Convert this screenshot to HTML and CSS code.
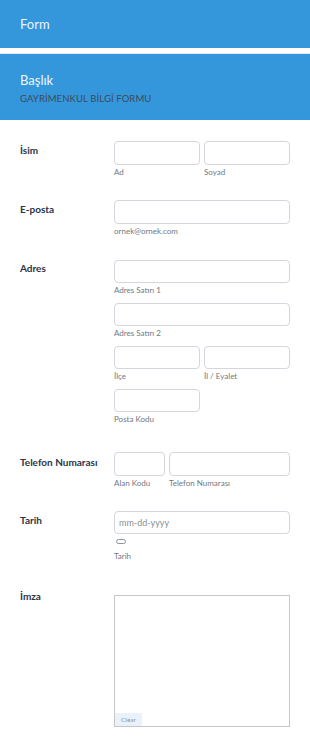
FILE: index.html
```html
<!DOCTYPE html>
<html lang="tr">
<head>
<meta charset="utf-8">
<title>Form</title>
<link rel="stylesheet" href="styles.css">
</head>
<body>
<div class="topbar">Form</div>
<div class="heading">
  <div class="heading-title">Başlık</div>
  <div class="heading-sub">GAYRİMENKUL BİLGİ FORMU</div>
</div>
<div class="form">
  <div class="row row-name">
    <div class="label">İsim</div>
    <div class="fields">
      <div class="pair">
        <div class="field"><div class="input"></div><div class="sub">Ad</div></div>
        <div class="field"><div class="input"></div><div class="sub">Soyad</div></div>
      </div>
    </div>
  </div>
  <div class="row row-email">
    <div class="label">E-posta</div>
    <div class="fields">
      <div class="field"><div class="input"></div><div class="sub">ornek@ornek.com</div></div>
    </div>
  </div>
  <div class="row row-addr">
    <div class="label">Adres</div>
    <div class="fields stack">
      <div class="field"><div class="input"></div><div class="sub">Adres Satırı 1</div></div>
      <div class="field"><div class="input"></div><div class="sub">Adres Satırı 2</div></div>
      <div class="pair">
        <div class="field"><div class="input"></div><div class="sub">İlçe</div></div>
        <div class="field"><div class="input"></div><div class="sub">İl / Eyalet</div></div>
      </div>
      <div class="pair">
        <div class="field"><div class="input"></div><div class="sub">Posta Kodu</div></div>
        <div class="field"></div>
      </div>
    </div>
  </div>
  <div class="row row-phone">
    <div class="label">Telefon Numarası</div>
    <div class="fields">
      <div class="phone">
        <div class="field area"><div class="input"></div><div class="sub">Alan Kodu</div></div>
        <div class="field num"><div class="input"></div><div class="sub">Telefon Numarası</div></div>
      </div>
    </div>
  </div>
  <div class="row row-date">
    <div class="label">Tarih</div>
    <div class="fields">
      <div class="field">
        <div class="input date"><span class="placeholder">mm-dd-yyyy</span></div>
        <div class="pill"></div>
        <div class="sub">Tarih</div>
      </div>
    </div>
  </div>
  <div class="row row-sign">
    <div class="label">İmza</div>
    <div class="fields">
      <div class="signpad"><span class="clear">Clear</span></div>
    </div>
  </div>
</div>
</body>
</html>
```
FILE: styles.css
```css
html, body {
  margin: 0;
  padding: 0;
  background: #ffffff;
}
body {
  width: 310px;
  font-family: "Lato", "Open Sans", "DejaVu Sans", sans-serif;
  color: #2c3345;
}
.topbar {
  height: 48px;
  background: #3597db;
  color: #eaf3fb;
  font-size: 13px;
  line-height: 48px;
  padding-left: 20px;
  border-bottom: 5px solid #ffffff;
}
.heading {
  border-top: 1px solid #e4e7ec;
  background: #3597db;
  height: 67px;
  box-sizing: border-box;
  padding: 18px 20px 0 20px;
}
.heading-title {
  color: #eef6fc;
  font-size: 13px;
  line-height: 16px;
}
.heading-sub {
  margin-top: 5px;
  color: #3c4a5a;
  font-size: 9.5px;
  line-height: 12px;
  letter-spacing: 0.1px;
}
.form {
  padding: 0 20px;
}
.row {
  display: flex;
}
.label {
  width: 94px;
  flex: none;
  font-size: 10px;
  font-weight: bold;
  color: #2c3345;
  line-height: 13px;
}
.fields {
  flex: 1;
  min-width: 0;
}
.pair {
  display: flex;
  gap: 4px;
}
.pair .field {
  flex: 1;
}
.input {
  height: 24px;
  box-sizing: border-box;
  border: 1px solid #d3d6dc;
  border-radius: 4px;
  background: #fff;
}
.sub {
  font-size: 8px;
  line-height: 9px;
  color: #72777f;
  margin-top: 3px;
  white-space: nowrap;
}
.row-name { margin-top: 21px; }
.row-name .label { margin-top: 3px; }
.row-email { margin-top: 23px; }
.row-email .label { margin-top: 3px; }
.row-addr { margin-top: 24px; }
.row-addr .label { margin-top: 2px; }
.stack .field { margin-bottom: 8px; }
.stack .pair:last-child .field { margin-bottom: 0; }
.row-addr .input { height: 23px; }
.phone {
  display: flex;
  gap: 4px;
}
.phone .area { width: 51px; flex: none; }
.phone .num { flex: 1; }
.row-phone { margin-top: 28px; }
.row-phone .label { margin-top: 4px; white-space: nowrap; }
.row-date { margin-top: 23px; }
.row-date .label { margin-top: 3px; }
.input.date {
  height: 23px;
  padding-left: 4px;
  display: flex;
  align-items: center;
}
.placeholder {
  font-size: 9px;
  color: #8a8f99;
}
.pill {
  width: 8px;
  height: 3px;
  border: 1px solid #8a8f99;
  border-radius: 3px;
  margin: 5px 0 0 2px;
}
.row-date .sub { margin-top: 8px; }
.row-sign { margin-top: 29px; }
.row-sign .label { margin-top: 0; }
.signpad {
  margin-top: 5px;
  height: 132px;
  box-sizing: border-box;
  border: 1px solid #c4c6ca;
  display: flex;
  align-items: flex-end;
}
.clear {
  background: #e9f1fb;
  color: #8d96a3;
  font-size: 6.5px;
  line-height: 13px;
  padding: 0 6px;
}
```
